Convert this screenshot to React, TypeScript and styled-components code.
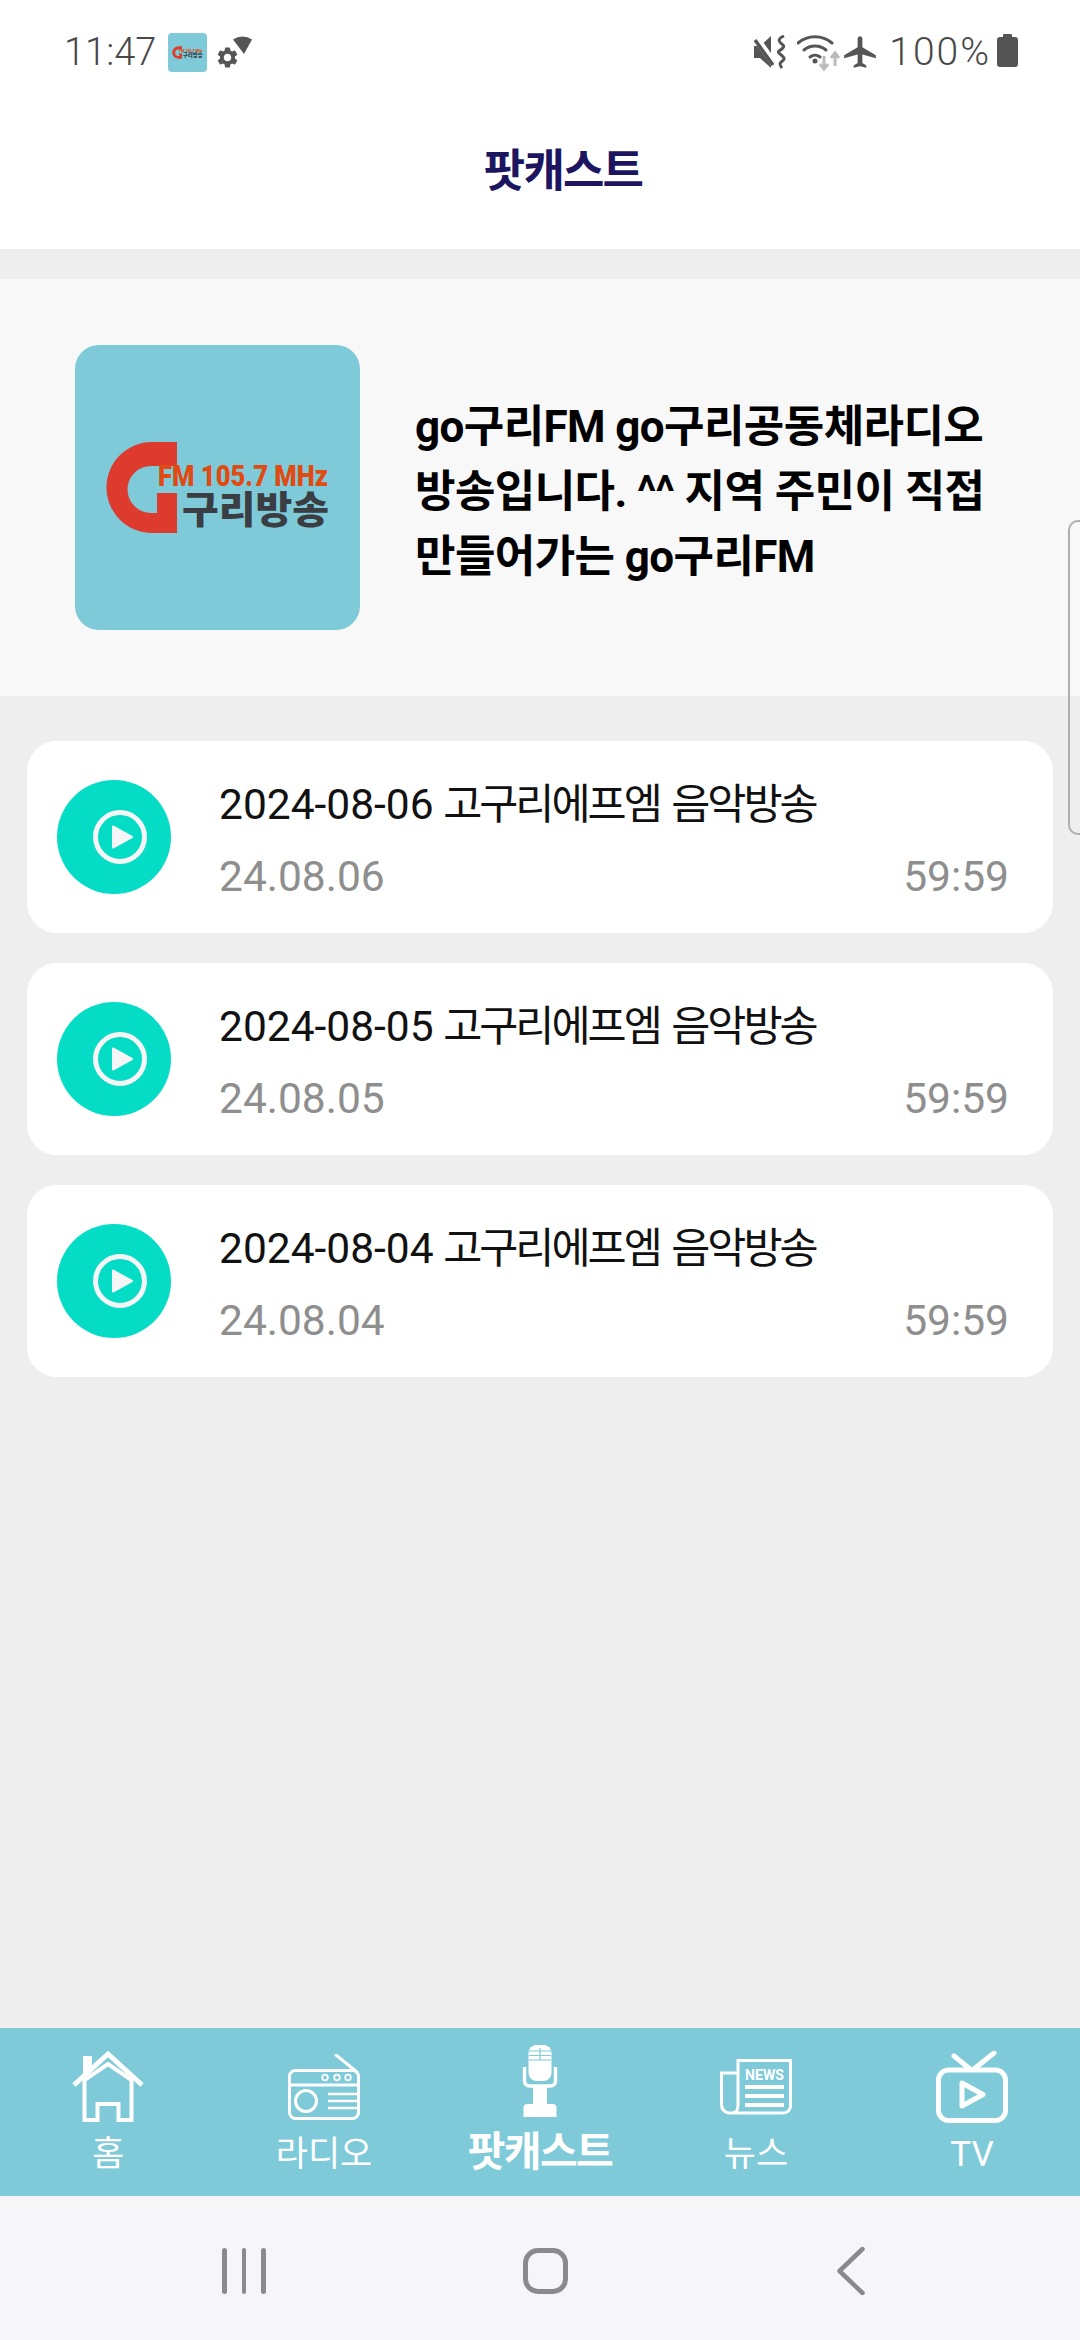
import React from 'react';
import styled, { createGlobalStyle } from 'styled-components';
import { MdSettings, MdAirplanemodeActive } from 'react-icons/md';

const GlobalStyle = createGlobalStyle`
  html, body {
    margin: 0;
    padding: 0;
    background: #eeeeee;
  }
  * {
    box-sizing: border-box;
  }
`;

const Screen = styled.div`
  position: relative;
  display: flex;
  flex-direction: column;
  width: 1080px;
  height: 2340px;
  overflow: hidden;
  background: #eeeeee;
  font-family: Roboto, 'Noto Sans CJK KR', sans-serif;
`;

const Header = styled.header`
  flex: none;
  background: #ffffff;
`;

const StatusBar = styled.div`
  height: 104px;
  padding: 0 62px 0 64px;
  display: flex;
  align-items: center;
  justify-content: space-between;
  color: #484848;
  font-size: 38px;
  font-weight: 300;
`;

const StatusGroup = styled.div`
  display: flex;
  align-items: center;
`;

const Clock = styled.span`
  margin-right: 12px;
`;

const MiniLogo = styled.div`
  width: 39px;
  height: 39px;
  border-radius: 4px;
  overflow: hidden;
  background: #7ecad9;
  margin-right: 10px;
`;

const Battery = styled.span`
  position: relative;
  width: 21px;
  height: 30px;
  margin-left: 6px;
  border-radius: 3px;
  background: #555555;

  &::before {
    content: '';
    position: absolute;
    top: -3px;
    left: 6px;
    width: 9px;
    height: 3px;
    border-radius: 1px 1px 0 0;
    background: #555555;
  }
`;

const Percent = styled.span`
  font-size: 39px;
  letter-spacing: 2px;
  margin-left: 10px;
`;

const MuteSlot = styled.span`
  display: flex;
  margin-right: 10px;
`;

const TitleBar = styled.div`
  height: 145px;
  padding: 0 0 19px 46px;
  display: flex;
  align-items: center;
  justify-content: center;
`;

const Title = styled.h1`
  margin: 0;
  font-size: 45px;
  font-weight: 700;
  letter-spacing: -1.8px;
  color: #1c1560;
`;

const Main = styled.main`
  flex: 1 1 auto;
  min-height: 0;
  padding-top: 30px;
  display: flex;
  flex-direction: column;
`;

const Intro = styled.section`
  height: 417px;
  padding: 0 40px 0 75px;
  display: flex;
  align-items: center;
  gap: 55px;
  background: #f8f8f8;
`;

const LogoTile = styled.div`
  flex: none;
  width: 285px;
  height: 285px;
  border-radius: 24px;
  overflow: hidden;
  background: #7ecad9;
`;

const IntroText = styled.p`
  margin: 0;
  padding-top: 10px;
  font-size: 44px;
  font-weight: 700;
  line-height: 65px;
  letter-spacing: -0.6px;
  word-break: keep-all;
  color: #000000;
`;

const EpisodeList = styled.ul`
  list-style: none;
  margin: 0;
  padding: 45px 27px 0;
  display: flex;
  flex-direction: column;
  gap: 30px;
`;

const EpisodeCard = styled.li`
  height: 192px;
  padding: 0 44px 0 30px;
  display: flex;
  align-items: center;
  gap: 48px;
  border-radius: 30px;
  background: #ffffff;
`;

const PlayDisc = styled.div`
  flex: none;
  width: 114px;
  height: 114px;
  padding-left: 12px;
  display: flex;
  align-items: center;
  justify-content: center;
  border-radius: 50%;
  background: #04dcc6;
`;

const EpisodeBody = styled.div`
  flex: 1;
  min-width: 0;
  padding-top: 8px;
`;

const EpisodeTitle = styled.div`
  font-size: 42.5px;
  line-height: 72px;
  color: #111111;
`;

const EpisodeName = styled.span`
  margin-left: -1px;
  letter-spacing: -3px;
  word-spacing: 4px;
`;

const EpisodeMeta = styled.div`
  display: flex;
  justify-content: space-between;
  font-size: 42.5px;
  line-height: 72px;
  color: #8e8e8e;
`;

const EdgeHandle = styled.div`
  position: absolute;
  top: 520px;
  right: 0;
  width: 12px;
  height: 315px;
  border: 2.5px solid #aeaeae;
  border-right: none;
  border-radius: 10px 0 0 10px;
`;

const TabBar = styled.nav`
  flex: none;
  height: 168px;
  display: grid;
  grid-template-columns: repeat(5, 1fr);
  background: #7ecad9;
`;

const Tab = styled.div`
  display: flex;
  flex-direction: column;
  align-items: center;
  color: #ffffff;
`;

const TabIcon = styled.div<{ $active?: boolean }>`
  height: 118px;
  display: flex;
  align-items: center;
  justify-content: center;
  padding-bottom: ${(p) => (p.$active ? '12px' : '0')};
`;

const TabLabel = styled.span<{ $active?: boolean }>`
  font-size: ${(p) => (p.$active ? '41px' : '35px')};
  font-weight: ${(p) => (p.$active ? 700 : 400)};
  letter-spacing: ${(p) => (p.$active ? '-1.6px' : '0')};
  line-height: 44px;
  margin-top: ${(p) => (p.$active ? '-16px' : '-13px')};
`;

const SystemNav = styled.div`
  flex: none;
  height: 144px;
  padding: 6px 215px 0 222px;
  display: flex;
  align-items: center;
  justify-content: space-between;
  background: #f6f6f8;
`;

const RecentLines = styled.div`
  display: flex;
  gap: 15px;
`;

const RecentLine = styled.span`
  width: 4.5px;
  height: 46px;
  border-radius: 3px;
  background: #8a8a8e;
`;

const HomeKey = styled.div`
  width: 45px;
  height: 46px;
  border: 5px solid #8a8a8e;
  border-radius: 15px;
  margin-right: 11px;
`;

const GuriLogo = () => (
  <svg viewBox="0 0 285 285" width="100%" height="100%">
    <path
      d="M102 97H77A45.5 45.5 0 0 0 77 188H102V148H82V168H76A23.5 23.5 0 0 1 76 121H102Z"
      fill="#dc3b2d"
    />
    <text
      x="83"
      y="141"
      fontFamily="Roboto, sans-serif"
      fontWeight="900"
      fontSize="30"
      fill="#e04b12"
      textLength="170"
      lengthAdjust="spacingAndGlyphs"
    >
      FM 105.7 MHz
    </text>
    <text
      x="107"
      y="178"
      fontFamily="'Noto Sans CJK KR', sans-serif"
      fontWeight="900"
      fontSize="38"
      fill="#3a3d42"
      textLength="147"
      lengthAdjust="spacingAndGlyphs"
    >
      구리방송
    </text>
  </svg>
);

const CastSignal = () => (
  <svg width="36" height="34" viewBox="0 0 36 34" style={{ marginTop: 2 }}>
    <path d="M16 3.5a17 17 0 0 1 19 0L27 18Z" fill="#555" />
    <MdSettings x="-2" y="9" size={25} color="#555" />
  </svg>
);

const MuteIcon = () => (
  <svg width="33" height="34" viewBox="0 0 33 34" fill="none">
    <path d="M0 11h6L17 1v32L6 23H0Z" fill="#555" />
    <path d="M2 3l20 28" stroke="#fff" strokeWidth="7" />
    <path d="M1 5l18 25" stroke="#555" strokeWidth="3.5" />
    <path d="M30 1c-9 4-3 7-1 9s-1 4-4 6 6 5 5 8-7 3-2 9" stroke="#555" strokeWidth="3" />
  </svg>
);

const WifiIcon = () => (
  <svg width="44" height="40" viewBox="0 0 44 40" fill="none">
    <path d="M1 11a26 26 0 0 1 34 0" stroke="#555" strokeWidth="3" strokeLinecap="round" />
    <path d="M7 18a17 17 0 0 1 22 0" stroke="#555" strokeWidth="3" strokeLinecap="round" />
    <path d="M13 25a8 8 0 0 1 10 0" stroke="#555" strokeWidth="3" strokeLinecap="round" />
    <circle cx="18" cy="29" r="2.5" fill="#555" />
    <path d="M27 24v12m-4-4 4 5 4-5" stroke="#bbb" strokeWidth="3" />
    <path d="M38 34V22m-4 4 4-5 4 5" stroke="#bbb" strokeWidth="3" />
  </svg>
);

const PlayMark = () => (
  <svg width="56" height="56" viewBox="0 0 56 56" fill="none">
    <circle cx="28" cy="28" r="24.5" stroke="#f5f5f5" strokeWidth="5" />
    <path d="M21 17.5 40 28 21 38.5Z" fill="#f5f5f5" stroke="#f5f5f5" strokeWidth="2" strokeLinejoin="round" />
  </svg>
);

const HomeIcon = () => (
  <svg width="72" height="72" viewBox="0 0 72 72" fill="none" stroke="#fff">
    <path d="M11 5h9v12l-9 8Z" fill="#fff" stroke="none" />
    <path d="M2 34 36 3l34 31" strokeWidth="5" />
    <path d="M12.5 29V69H25.5V53H46.5V69H59.5V29L36 13Z" strokeWidth="4" />
  </svg>
);

const RadioIcon = () => (
  <svg width="72" height="66" viewBox="0 0 72 66" fill="none" stroke="#fff">
    <rect x="1.5" y="16.5" width="69" height="48" rx="6" strokeWidth="3" />
    <path d="M48 1l21 17" strokeWidth="3" strokeLinecap="round" />
    <path d="M2 31h68" strokeWidth="3" />
    <circle cx="37" cy="23.5" r="2.8" strokeWidth="1.8" />
    <circle cx="49" cy="23.5" r="2.8" strokeWidth="1.8" />
    <circle cx="60" cy="23.5" r="2.8" strokeWidth="1.8" />
    <circle cx="18" cy="47" r="10.5" strokeWidth="3" />
    <path d="M40 40h29M40 47h29M40 54h29" strokeWidth="2.5" />
  </svg>
);

const MicIcon = () => (
  <svg width="36" height="72" viewBox="0 0 36 72" fill="none">
    <rect x="6.5" y="0" width="23" height="36" rx="8" fill="#fff" />
    <path d="M7 6h22M7 10.5h22M7 15h22M18 3v12" stroke="#7ecad9" strokeWidth="1.2" />
    <path d="M2.5 22v14a5 5 0 0 0 5 5h21a5 5 0 0 0 5-5V22" stroke="#fff" strokeWidth="3.5" />
    <path d="M11 41h14v18H11Z" fill="#fff" />
    <path d="M1.5 72V63a4 4 0 0 1 4-4h25a4 4 0 0 1 4 4v9Z" fill="#fff" />
  </svg>
);

const NewsIcon = () => (
  <svg width="72" height="56" viewBox="0 0 72 56" fill="none" stroke="#fff">
    <path d="M18 1.5H70.5V47a7 7 0 0 1-7 7H12C17 54 18 50 18 46Z" strokeWidth="3" />
    <path d="M18 14H1.5V46a8 8 0 0 0 8 8H12" strokeWidth="3" />
    <text
      x="25"
      y="21"
      fill="#fff"
      stroke="none"
      fontFamily="Roboto, sans-serif"
      fontWeight="700"
      fontSize="15"
      textLength="39"
      lengthAdjust="spacingAndGlyphs"
    >
      NEWS
    </text>
    <path d="M25 28h39M25 37h39M25 46h39" strokeWidth="4" />
  </svg>
);

const TvIcon = () => (
  <svg width="72" height="72" viewBox="0 0 72 72" fill="none" stroke="#fff" strokeLinecap="round" strokeLinejoin="round">
    <rect x="2.5" y="19" width="67" height="50.5" rx="10" strokeWidth="5" />
    <path d="M18 5l16 13M58 2 38 18" strokeWidth="5" />
    <path d="M26 32v23l21-11.5Z" strokeWidth="5" />
  </svg>
);

const BackChevron = () => (
  <svg width="28" height="48" viewBox="0 0 28 48" fill="none">
    <path d="M25.5 2 2.5 24l23 22" stroke="#8a8a8e" strokeWidth="4.5" strokeLinecap="round" strokeLinejoin="round" />
  </svg>
);

const episodes = [
  { stamp: '2024-08-06', name: '고구리에프엠 음악방송', date: '24.08.06', length: '59:59' },
  { stamp: '2024-08-05', name: '고구리에프엠 음악방송', date: '24.08.05', length: '59:59' },
  { stamp: '2024-08-04', name: '고구리에프엠 음악방송', date: '24.08.04', length: '59:59' },
];

const tabs = [
  { label: '홈', icon: <HomeIcon /> },
  { label: '라디오', icon: <RadioIcon /> },
  { label: '팟캐스트', icon: <MicIcon />, active: true },
  { label: '뉴스', icon: <NewsIcon /> },
  { label: 'TV', icon: <TvIcon /> },
];

export default function App() {
  return (
    <Screen>
      <GlobalStyle />
      <Header>
        <StatusBar>
          <StatusGroup>
            <Clock>11:47</Clock>
            <MiniLogo>
              <GuriLogo />
            </MiniLogo>
            <CastSignal />
          </StatusGroup>
          <StatusGroup>
            <MuteSlot>
              <MuteIcon />
            </MuteSlot>
            <WifiIcon />
            <MdAirplanemodeActive size={38} color="#555" />
            <Percent>100%</Percent>
            <Battery />
          </StatusGroup>
        </StatusBar>
        <TitleBar>
          <Title>팟캐스트</Title>
        </TitleBar>
      </Header>

      <Main>
        <Intro>
          <LogoTile>
            <GuriLogo />
          </LogoTile>
          <IntroText>go구리FM go구리공동체라디오 방송입니다. ^^ 지역 주민이 직접 만들어가는 go구리FM</IntroText>
        </Intro>
        <EpisodeList>
          {episodes.map((ep) => (
            <EpisodeCard key={ep.date}>
              <PlayDisc>
                <PlayMark />
              </PlayDisc>
              <EpisodeBody>
                <EpisodeTitle>
                  {ep.stamp} <EpisodeName>{ep.name}</EpisodeName>
                </EpisodeTitle>
                <EpisodeMeta>
                  <span>{ep.date}</span>
                  <span>{ep.length}</span>
                </EpisodeMeta>
              </EpisodeBody>
            </EpisodeCard>
          ))}
        </EpisodeList>
      </Main>

      <EdgeHandle />

      <TabBar>
        {tabs.map((tab) => (
          <Tab key={tab.label}>
            <TabIcon $active={tab.active}>{tab.icon}</TabIcon>
            <TabLabel $active={tab.active}>{tab.label}</TabLabel>
          </Tab>
        ))}
      </TabBar>

      <SystemNav>
        <RecentLines>
          <RecentLine />
          <RecentLine />
          <RecentLine />
        </RecentLines>
        <HomeKey />
        <BackChevron />
      </SystemNav>
    </Screen>
  );
}
